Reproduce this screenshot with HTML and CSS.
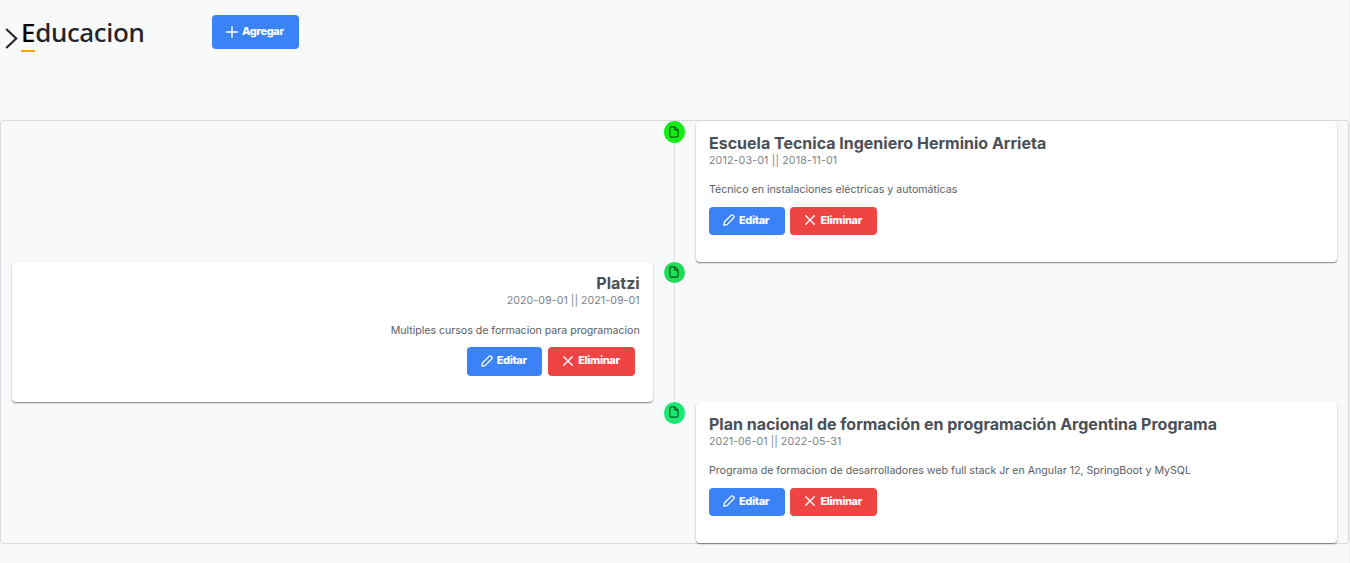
FILE: index.html
```html
<!DOCTYPE html>
<html lang="es">
<head>
<meta charset="utf-8">
<title>Educacion</title>
<link rel="stylesheet" href="styles.css">
</head>
<body>
<svg class="sprite" aria-hidden="true">
  <symbol id="plus" viewBox="0 0 14 14"><path d="M7 .8v12.400M.8 7h12.400" fill="none" stroke="currentColor" stroke-width="1.600" stroke-linecap="round"/></symbol>
  <symbol id="pencil" viewBox="0 0 14 14"><path d="M1.100 12.900l.5-3.600 7.800-7.700c.7-.7 1.800-.7 2.500 0l.5.5c.7.7.7 1.800 0 2.500l-7.700 7.800z" fill="none" stroke="currentColor" stroke-width="1.500" stroke-linejoin="round"/></symbol>
  <symbol id="times" viewBox="0 0 14 14"><path d="M2 2l10 10M12 2l-10 10" fill="none" stroke="currentColor" stroke-width="1.600" stroke-linecap="round"/></symbol>
  <symbol id="file" viewBox="0 0 12 12"><path d="M2.900.9H7l3 3v6.200a1 1 0 0 1-1 1H2.900a1 1 0 0 1-1-1V1.900a1 1 0 0 1 1-1zM6.800 1v3.100H10" fill="none" stroke="currentColor" stroke-width=".95" stroke-linejoin="round"/></symbol>
</svg>
<header class="header">
  <svg class="chevron" viewBox="0 0 12 20"><path d="M1 1l9.500 9L1 19" fill="none" stroke="currentColor" stroke-width="2"/></svg>
  <h1 class="title"><span class="initial">E</span>ducacion</h1>
  <button class="btn btn-add"><svg class="icon"><use href="#plus"/></svg><span>Agregar</span></button>
</header>
<main class="timeline">
  <section class="event">
    <div class="marker-col"><span class="marker marker-1"><svg><use href="#file"/></svg></span><span class="line"></span></div>
    <article class="card">
      <h2>Escuela Tecnica Ingeniero Herminio Arrieta</h2>
      <p class="dates first-dates">2012-03-01 || 2018-11-01</p>
      <p class="desc">Técnico en instalaciones eléctricas y automáticas</p>
      <div class="actions"><button class="btn"><svg class="icon"><use href="#pencil"/></svg><span>Editar</span></button><button class="btn danger"><svg class="icon"><use href="#times"/></svg><span>Eliminar</span></button></div>
    </article>
  </section>
  <section class="event left">
    <div class="marker-col"><span class="marker marker-2"><svg><use href="#file"/></svg></span><span class="line"></span></div>
    <article class="card">
      <h2>Platzi</h2>
      <p class="dates">2020-09-01 || 2021-09-01</p>
      <p class="desc">Multiples cursos de formacion para programacion</p>
      <div class="actions"><button class="btn"><svg class="icon"><use href="#pencil"/></svg><span>Editar</span></button><button class="btn danger"><svg class="icon"><use href="#times"/></svg><span>Eliminar</span></button></div>
    </article>
  </section>
  <section class="event">
    <div class="marker-col"><span class="marker marker-3"><svg><use href="#file"/></svg></span></div>
    <article class="card">
      <h2>Plan nacional de formación en programación Argentina Programa</h2>
      <p class="dates">2021-06-01 || 2022-05-31</p>
      <p class="desc">Programa de formacion de desarrolladores web full stack Jr en Angular 12, SpringBoot y MySQL</p>
      <div class="actions"><button class="btn"><svg class="icon"><use href="#pencil"/></svg><span>Editar</span></button><button class="btn danger"><svg class="icon"><use href="#times"/></svg><span>Eliminar</span></button></div>
    </article>
  </section>
</main>
</body>
</html>
```
FILE: styles.css
```css
* { box-sizing: border-box; }
body { margin: 0; height: 563px; overflow: hidden; background: #f8f9fb; color: #212529; font-family: Inter, sans-serif; border-right: 1px solid #eff0f2; }
h1, h2, p { margin: 0; }
.sprite { display: none; }
.header { display: flex; align-items: flex-start; height: 120px; padding: 15px 0 0 5px; }
.chevron { width: 13px; height: 21px; margin-top: 13px; }
.title { width: 191px; margin-left: 3px; font: 500 26px/34px "Noto Sans", sans-serif; letter-spacing: -.34px; }
.initial { display: inline-block; height: 37px; color: #000; border-bottom: 2px solid orange; }
.btn { display: inline-flex; align-items: center; height: 28px; padding: 0 14px; border: 0; border-radius: 4px; background: #3b82f6; color: #fff; font: 800 11px/16px Inter, sans-serif; letter-spacing: -.35px; }
.btn span { position: relative; top: -1px; }
.icon { width: 12px; height: 12px; margin-right: 4px; }
.actions .icon { margin-bottom: 1px; }
.actions .danger .icon { margin-right: 4.500px; }
.btn-add { width: 87px; height: 34px; }
.btn-add .icon { margin-bottom: 1px; }
.actions .btn { width: 76px; }
.actions .danger { width: 87px; background: #ef4444; }
.left .actions .btn { height: 29px; padding-bottom: 1px; }
.left .actions .btn:first-child { width: 75px; }
.timeline { height: 424px; border: 1px solid #d9dbde; border-radius: 3px; display: grid; grid-template-rows: 140.670px 140.670px 140.670px; }
.event { display: grid; grid-template-columns: 641.330px 21.330px 641.330px; column-gap: 10.670px; padding: 0 0 0 10.670px; }
.marker-col { grid-column: 2; grid-row: 1; display: flex; flex-direction: column; align-items: center; }
.marker { width: 21.330px; height: 21.330px; border-radius: 50%; flex: none; display: grid; place-items: center; color: #052b0a; }
.marker-1 { height: 22px; }
.marker svg { width: 12px; height: 12px; margin-bottom: 1px; }
.marker-1 { background: #16ed16; }
.marker-2 { background: #1edb58; }
.marker-3 { background: #19e873; }
.line { width: 1px; flex: 1; background: #dee0e4; }
.card { grid-column: 3; grid-row: 1; padding: 13px 13.330px 0; background: #fff; border-radius: 4px; box-shadow: 0 1px 2px rgba(0,0,0,.25), 0 1px 1px rgba(0,0,0,.28); }
.left .card { grid-column: 1; display: flex; flex-direction: column; align-items: flex-end; padding-top: 12.330px; }
.card h2 { font: 700 16px/19px Inter, sans-serif; color: #495057; }
.dates { margin-top: 1px; font-size: 10.670px; line-height: 14px; color: #7c838a; letter-spacing: .04px; }
.first-dates { letter-spacing: .14px; }
.desc { margin-top: 13.500px; font-size: 10.670px; line-height: 16px; color: #5a6168; letter-spacing: -.02px; }
.left .desc { margin-top: 15.500px; letter-spacing: -.04px; }
.actions { display: flex; gap: 5px; margin-top: 9px; }
.left .actions { margin-top: 8px; margin-right: 5px; gap: 6px; }
```
